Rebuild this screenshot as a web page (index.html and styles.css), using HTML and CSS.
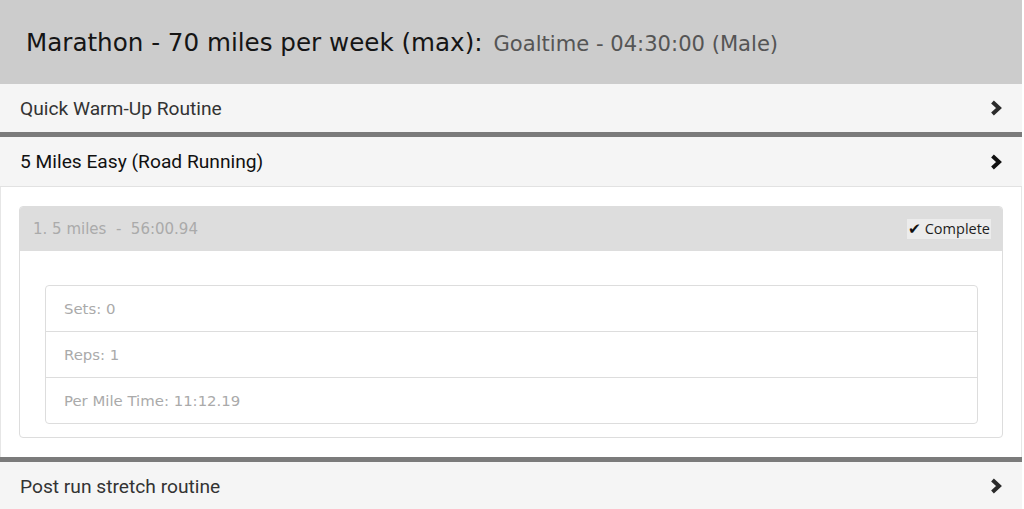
FILE: index.html
```html
<!DOCTYPE html>
<html>
<head>
<meta charset="utf-8">
<link rel="stylesheet" href="styles.css">
</head>
<body>
<div class="page">
  <div class="header">
    <span class="title">Marathon - 70 miles per week (max):</span>
    <span class="subtitle">Goaltime - 04:30:00 (Male)</span>
  </div>

  <div class="panel">
    <div class="panel-heading">
      <span>Quick Warm-Up Routine</span>
      <svg class="chev" viewBox="0 0 14 16" width="14" height="16"><path d="M3.5 2 L10 8 L3.5 14" fill="none" stroke="#2b2b2b" stroke-width="4" stroke-linejoin="miter"/></svg>
    </div>
  </div>

  <div class="panel sep">
    <div class="panel-heading open">
      <span class="dark">5 Miles Easy (Road Running)</span>
      <svg class="chev" viewBox="0 0 14 16" width="14" height="16"><path d="M3.5 2 L10 8 L3.5 14" fill="none" stroke="#111" stroke-width="4" stroke-linejoin="miter"/></svg>
    </div>
    <div class="panel-body">
      <div class="card">
        <div class="card-head">
          <span>1. 5 miles &nbsp;-&nbsp; 56:00.94</span>
          <span class="complete"><span class="tick">✔</span> Complete</span>
        </div>
        <div class="card-body">
          <ul class="list">
            <li>Sets: 0</li>
            <li>Reps: 1</li>
            <li>Per Mile Time: 11:12.19</li>
          </ul>
        </div>
      </div>
    </div>
  </div>

  <div class="panel sep">
    <div class="panel-heading">
      <span>Post run stretch routine</span>
      <svg class="chev" viewBox="0 0 14 16" width="14" height="16"><path d="M3.5 2 L10 8 L3.5 14" fill="none" stroke="#2b2b2b" stroke-width="4" stroke-linejoin="miter"/></svg>
    </div>
  </div>
</div>
</body>
</html>
```

FILE: styles.css
```css
html, body {
  margin: 0;
  padding: 0;
  background: #fff;
}
.page {
  width: 1022px;
}
.header {
  height: 84px;
  background: #cccccc;
  display: flex;
  align-items: center;
  padding-left: 26px;
  box-sizing: border-box;
  gap: 11px;
}
.title {
  font-family: "DejaVu Sans", Verdana, sans-serif;
  font-size: 24.6px;
  color: #151515;
}
.subtitle {
  font-family: "DejaVu Sans", Verdana, sans-serif;
  font-size: 21.1px;
  color: #555;
  position: relative;
  top: 1px;
}
.panel {
  background: #f5f5f5;
}
.panel.sep {
  border-top: 5px solid #7b7b7b;
}
.panel-heading {
  height: 48px;
  display: flex;
  align-items: center;
  justify-content: space-between;
  padding: 0 20px 0 20px;
  font-family: Roboto, "Open Sans", sans-serif;
  font-size: 19.2px;
  color: #333;
  box-sizing: border-box;
}
.panel-heading .dark {
  color: #111;
}
.panel-heading.open {
  height: 50px;
  border-bottom: 1px solid #e2e2e2;
}
.chev {
  display: block;
  margin-right: -1px;
}
.panel-body {
  background: #fff;
  padding: 19px 18px 19px 18px;
  border-left: 1px solid #e6e6e6;
  border-right: 1px solid #e6e6e6;
}
.card {
  border: 1px solid #dddddd;
  border-radius: 4px;
  overflow: hidden;
  background: #fff;
}
.card-head {
  height: 44px;
  background: #dddddd;
  display: flex;
  align-items: center;
  justify-content: space-between;
  padding: 0 11px 0 13px;
  font-family: "DejaVu Sans", Verdana, sans-serif;
  font-size: 15px;
  color: #aaaaaa;
}
.complete {
  background: #ececec;
  font-family: "Open Sans", sans-serif;
  font-size: 14.5px;
  color: #1e1e1e;
  padding: 0 1px 0 1px;
  line-height: 20px;
}
.tick {
  font-family: "DejaVu Sans", sans-serif;
  font-size: 15.5px;
  color: #111;
}
.card-body {
  padding: 34px 24px 13px 25px;
}
.list {
  list-style: none;
  margin: 0;
  padding: 0;
  border: 1px solid #dddddd;
  border-radius: 4px;
}
.list li {
  height: 45px;
  display: flex;
  align-items: center;
  padding-left: 18px;
  font-family: "DejaVu Sans", Verdana, sans-serif;
  font-size: 14.9px;
  color: #aaaaaa;
  border-top: 1px solid #dddddd;
}
.list li:first-child {
  border-top: none;
}
```
